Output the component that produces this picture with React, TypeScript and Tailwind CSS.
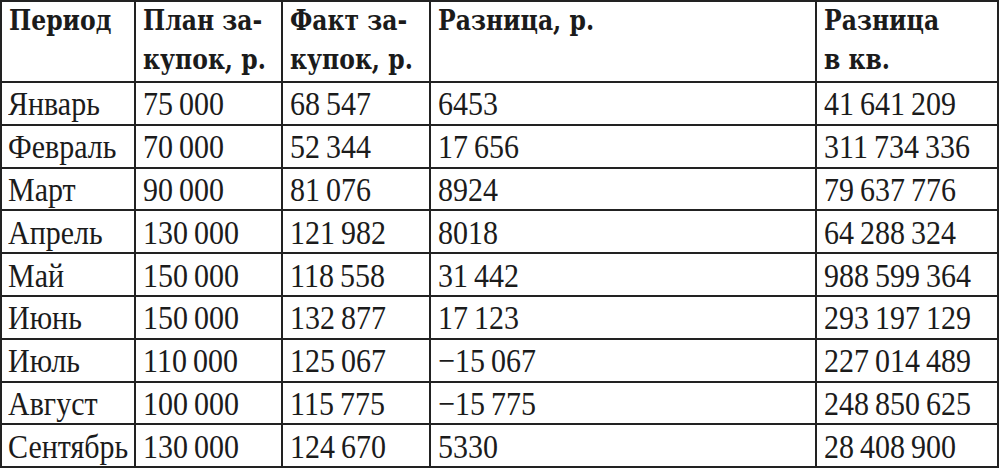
import React from 'react';

const rows = [
  ['Январь', '75 000', '68 547', '6453', '41 641 209'],
  ['Февраль', '70 000', '52 344', '17 656', '311 734 336'],
  ['Март', '90 000', '81 076', '8924', '79 637 776'],
  ['Апрель', '130 000', '121 982', '8018', '64 288 324'],
  ['Май', '150 000', '118 558', '31 442', '988 599 364'],
  ['Июнь', '150 000', '132 877', '17 123', '293 197 129'],
  ['Июль', '110 000', '125 067', '\u221215 067', '227 014 489'],
  ['Август', '100 000', '115 775', '\u221215 775', '248 850 625'],
  ['Сентябрь', '130 000', '124 670', '5330', '28 408 900'],
];

// thin space between digit groups, as in the printed table
const num = (s: string) => s.replace(/ /g, '\u2009');

const headers = [
  ['Период'],
  ['План за-', 'купок, р.'],
  ['Факт за-', 'купок, р.'],
  ['Разница, р.'],
  ['Разница', 'в кв.'],
];

export default function App() {
  return (
    <div className="w-[1000px] h-[468px] bg-white overflow-hidden">
      <table className="w-[999px] border-collapse table-fixed text-[#1b1b1b]">
        <colgroup>
          <col className="w-[134px]" />
          <col className="w-[147px]" />
          <col className="w-[148px]" />
          <col className="w-[386px]" />
          <col />
        </colgroup>
        <thead>
          <tr className="h-[81px]">
            {headers.map((h, i) => (
              <th
                key={i}
                className="border-2 border-[#222] align-top text-left font-bold px-[7px] pt-[1px] font-['DejaVu_Serif',serif] text-[23.5px] leading-[39px]"
              >
                {h.map((line, j) => (
                  <div key={j} className="whitespace-nowrap">
                    <span className="inline-block scale-y-120 origin-[50%_72%]">{line}</span>
                  </div>
                ))}
              </th>
            ))}
          </tr>
        </thead>
        <tbody>
          {rows.map((r) => (
            <tr key={r[0]} className="h-[42.8px]">
              {r.map((c, i) => (
                <td
                  key={i}
                  className={`border-2 border-[#222] align-middle whitespace-nowrap font-['Liberation_Serif',serif] text-[30px] leading-none ${i === 0 ? 'pl-[6px] pr-0' : 'px-[7px]'}`}
                >
                  <span className="inline-block scale-y-115 origin-center">{num(c)}</span>
                </td>
              ))}
            </tr>
          ))}
        </tbody>
      </table>
    </div>
  );
}
